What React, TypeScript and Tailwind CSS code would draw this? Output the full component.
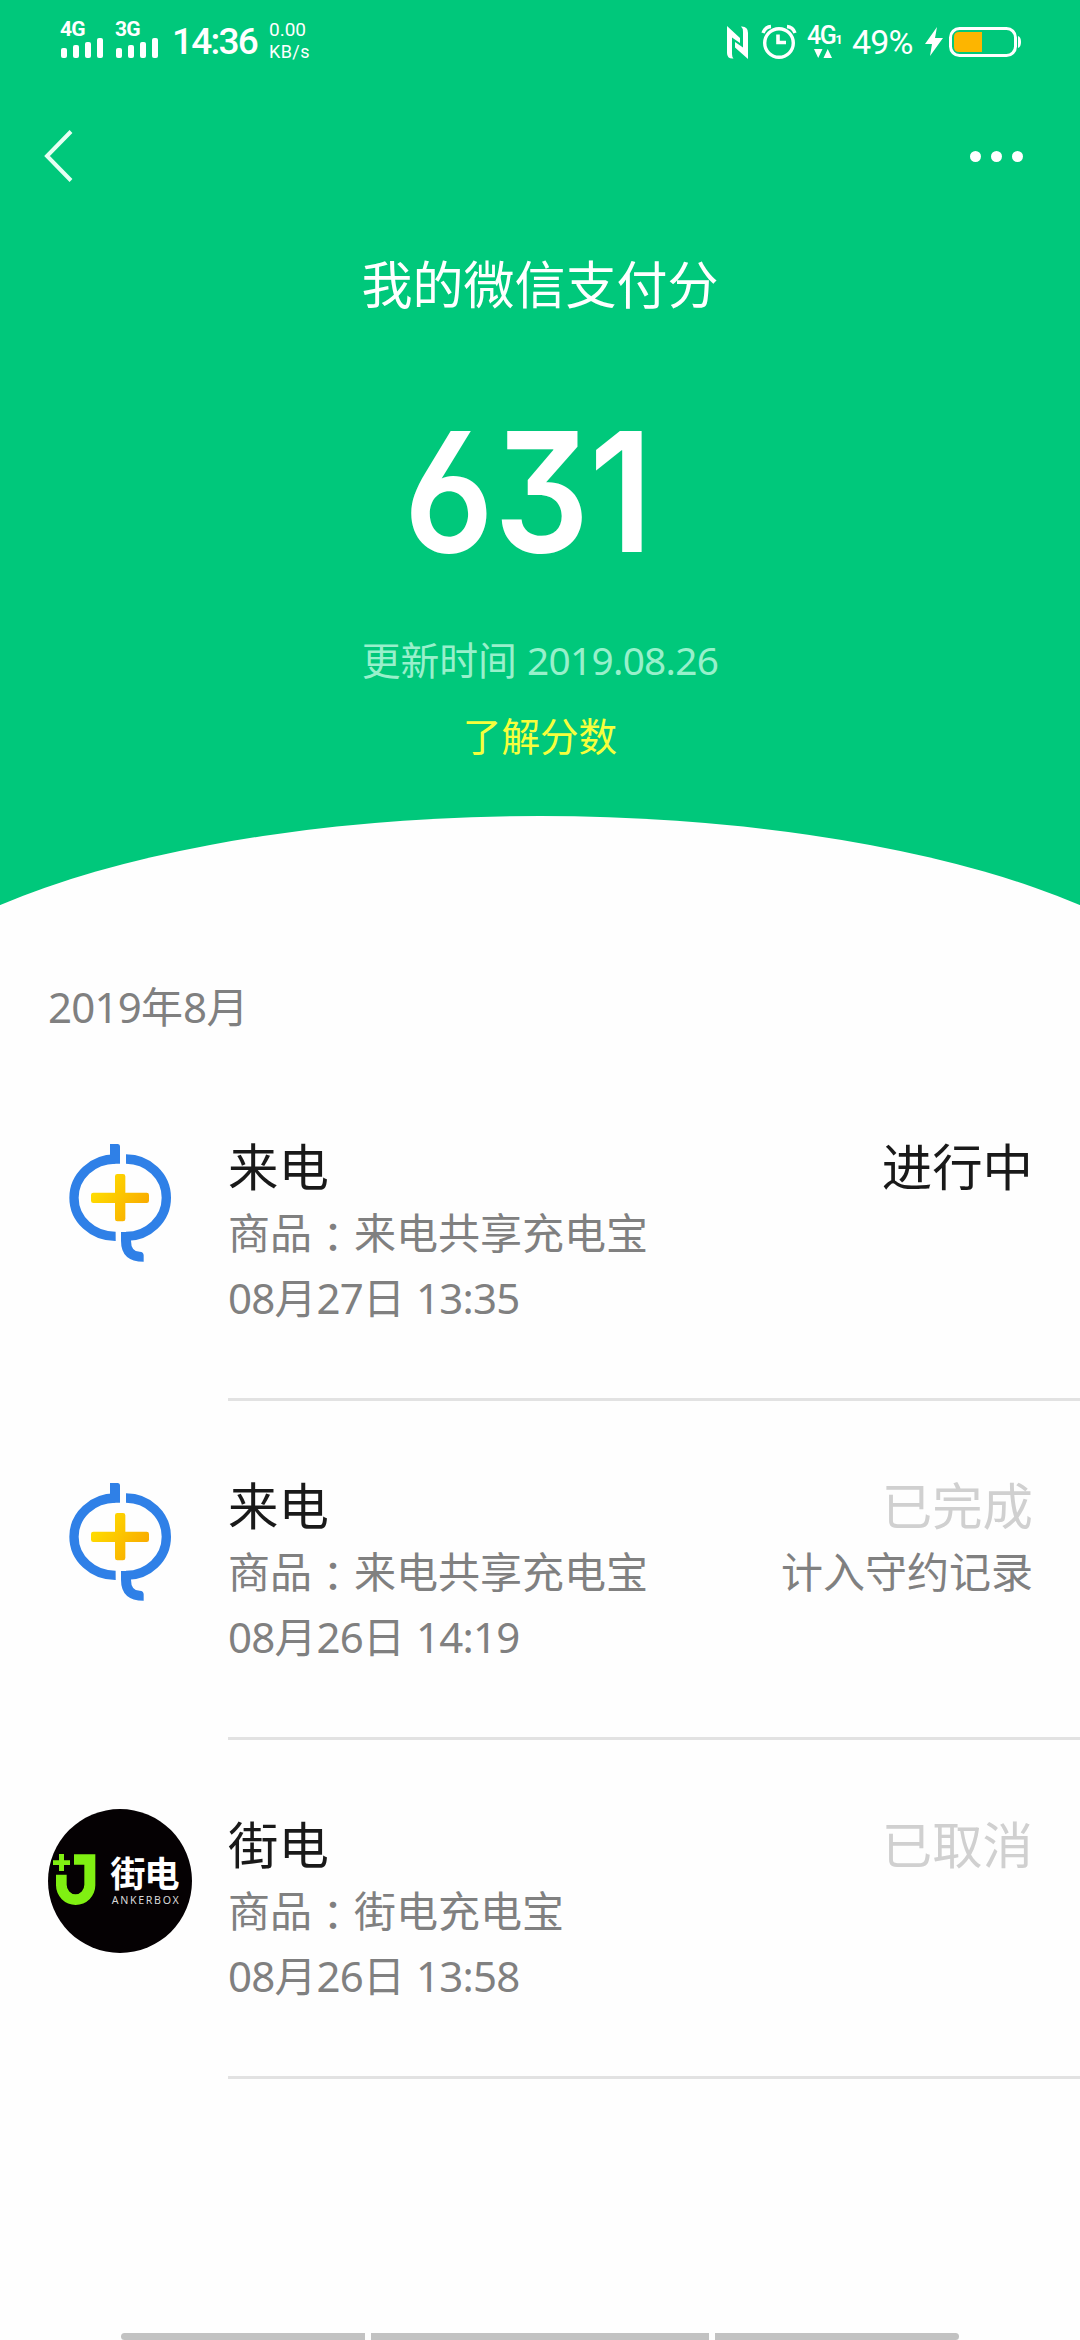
import { clsx } from "clsx";

type Order = {
  shop: string;
  goods: string;
  time: string;
  status: string;
  active?: boolean;
  note?: string;
  logo: "laidian" | "ankerbox";
};

const orders: Order[] = [
  { shop: "来电", goods: "来电共享充电宝", time: "08月27日 13:35", status: "进行中", active: true, logo: "laidian" },
  { shop: "来电", goods: "来电共享充电宝", time: "08月26日 14:19", status: "已完成", note: "计入守约记录", logo: "laidian" },
  { shop: "街电", goods: "街电充电宝", time: "08月26日 13:58", status: "已取消", logo: "ankerbox" },
];

// Digits sit slightly tighter than the Chinese characters around them
function DateText({ children }: { children: string }) {
  return children.split(/([\d.:]+)/).map((part, i) =>
    /\d/.test(part) ? (
      <span key={i} className="tracking-[-0.018em]">
        {part}
      </span>
    ) : (
      part
    ),
  );
}

function Signal({ label }: { label: string }) {
  return (
    <div className="flex w-[43px] flex-col">
      <span className="-ml-px font-['Roboto',sans-serif] text-[21px] leading-[16px] font-bold tracking-[-0.8px]">{label}</span>
      <div className="mt-px flex h-5 items-end gap-1.5">
        <i className="h-[10px] w-1.5 rounded-[2px] bg-white" />
        <i className="h-[13px] w-1.5 rounded-[2px] bg-white" />
        <i className="h-[16px] w-1.5 rounded-[2px] bg-white" />
        <i className="h-[20px] w-1.5 rounded-[2px] bg-white" />
      </div>
    </div>
  );
}

function StatusBar() {
  return (
    <div className="flex h-[84px] items-start pt-[21px] pl-[61px] font-['Roboto',sans-serif] text-white">
      <Signal label="4G" />
      <div className="ml-3">
        <Signal label="3G" />
      </div>
      <span className="ml-[13px] w-[97px] text-[37px] leading-[42px] font-medium tracking-[-1.8px] whitespace-nowrap">14:36</span>
      <div className="flex w-[61px] flex-col text-[19px] leading-[23px]">
        <span className="-mt-[3px]">0.00</span>
        <span className="-mt-px text-[18px] tracking-[0.4px]">KB/s</span>
      </div>

      <svg className="mt-[4px] ml-[396px] h-[36px] w-[24px]" viewBox="0 0 24 36" fill="white">
        <path d="M1 1 L14 13 V18 L6 12.500 V29 Q6 32 7.500 33.500 Q1 34 1 28 Z" />
        <path d="M22 34 L9 22.500 V17 L17 22.500 V7 Q17 3 15 1.500 Q22 1 22 8 Z" />
      </svg>
      <svg className="mt-[3px] ml-[11px] h-[36px] w-[36px]" viewBox="0 0 36 36" fill="none" stroke="white">
        <circle cx="18" cy="19" r="14.3" strokeWidth="3.4" />
        <path d="M17 10.500 V18.500 H25" strokeWidth="3.600" />
        <path d="M2 9 Q4 3 10 2.500 M26 2.500 Q32 3 34 9" strokeWidth="3.400" />
      </svg>
      <div className="mt-[5px] ml-[10px] flex w-[36px] flex-col">
        <div className="flex items-end leading-[20px]">
          <span className="text-[25px] font-medium tracking-[-1.5px]">4G</span>
          <span className="text-[13px] leading-[13px] font-bold">1</span>
        </div>
        <svg className="mt-[3px] ml-[7px] h-[9px] w-[18px]" viewBox="0 0 18 9" fill="white">
          <path d="M0 0 H8.500 L4.200 9 Z M9.500 9 H18 L13.700 0 Z" />
        </svg>
      </div>
      <span className="ml-[9px] w-[68px] text-[34px] leading-[42px] tracking-[-0.9px]">49%</span>
      <svg className="mt-[6px] ml-[4px] h-[30px] w-[20px]" viewBox="0 0 20 30" fill="white">
        <path d="M13 0 L1 17 H8 L6 29 L19 11 H11 Z" />
      </svg>
      <svg className="mt-[5px] ml-[5px] h-[32px] w-[74px]" viewBox="0 0 74 32">
        <path d="M10 6 H33 V26 H10 Q5 26 5 21 V11 Q5 6 10 6 Z" fill="#fdb500" />
        <rect x="1.500" y="2.500" width="65" height="27" rx="9" fill="none" stroke="white" strokeWidth="3" />
        <path d="M69 10 Q72 11 72 16 Q72 21 69 22 Z" fill="white" />
      </svg>
    </div>
  );
}

function LaidianLogo() {
  return (
    <svg className="h-36 w-36" viewBox="54 33 432 432" fill="none">
      <defs>
        <linearGradient id="gold" x1="183" y1="170" x2="357" y2="290" gradientUnits="userSpaceOnUse">
          <stop offset="0.1" stopColor="#ffdf00" />
          <stop offset="1" stopColor="#f8a400" />
        </linearGradient>
      </defs>
      <g stroke="#2f80e7" strokeWidth="28">
        <path d="M256 117 A124 116 0 0 0 132 233 A124 116 0 0 0 257 349" />
        <path d="M288 117 A121 116 0 0 1 409 233 A121 116 0 0 1 288 349" />
      </g>
      <path d="M240 72 H264 Q270 73 270 79 V131 H240 Z" fill="#2f80e7" />
      <path d="M273 336 H303 V362 Q303 395 329 395 Q341 396 341 406 V425 Q273 425 273 362 Z" fill="#2f80e7" />
      <path
        d="M262 162 H279 Q286 162 286 169 V218 H350 Q357 218 357 225 V242 Q357 249 350 249 H286 V297 Q286 304 279 304 H262 Q255 304 255 297 V249 H190 Q183 249 183 242 V225 Q183 218 190 218 H255 V169 Q255 162 262 162 Z"
        fill="url(#gold)"
      />
    </svg>
  );
}

function AnkerboxLogo() {
  return (
    <svg className="h-36 w-36 rounded-full bg-[#050103]" viewBox="54 57 432 432">
      <g fill="#80f012">
        <path d="M132 193 H196 V286 A59 59 0 0 1 78 286 V254 H110 V284 A26.500 29 0 0 0 163 284 V224 H132 Z" />
        <path d="M87 192 H102 V211 H120 V225 H102 V243 H87 V225 H69 V211 H87 Z" />
      </g>
      <text x="241" y="290" textLength="208" fill="white" className="font-['Noto_Sans_CJK_SC',sans-serif] text-[106px] font-bold">
        街电
      </text>
      <text x="245" y="343" textLength="201" fill="#d8d8d8" className="font-['Noto_Sans',sans-serif] text-[32px]">
        ANKERBOX
      </text>
    </svg>
  );
}

function OrderRow({ order }: { order: Order }) {
  return (
    <li className="flex h-[339px] pl-12">
      <div className="w-[180px] shrink-0 pt-[69px]">
        {order.logo === "laidian" ? <LaidianLogo /> : <AnkerboxLogo />}
      </div>
      <div className="flex flex-1 justify-between border-b-[3px] border-[#e2e2e2] pt-[72px] pr-12 text-[42px] leading-[66px] text-[#808080]">
        <div>
          <h2 className="text-[50.400px] text-[#191919]">{order.shop}</h2>
          <p className="h-[65px]">
            商品<span className="relative top-[4px] font-['Noto_Sans_CJK_TC',sans-serif] leading-none">：</span>
            {order.goods}
          </p>
          <p>
            <DateText>{order.time}</DateText>
          </p>
        </div>
        <div className="-mr-px text-right">
          <p className={clsx("text-[50.400px]", order.active ? "text-[#191919]" : "text-[#d0d0d0]")}>{order.status}</p>
          {order.note && <p>{order.note}</p>}
        </div>
      </div>
    </li>
  );
}

export default function App() {
  return (
    <div className="flex h-[2340px] w-[1080px] flex-col overflow-hidden bg-[#fefefe] font-['Noto_Sans','Noto_Sans_CJK_SC',sans-serif]">
      <header className="flex h-[905px] shrink-0 flex-col bg-[#00c87b]">
        <StatusBar />

        <nav className="flex h-[144px] items-center justify-between pr-[57px] pl-[42px]">
          <svg className="h-[54px] w-[32px]" viewBox="0 0 32 54" fill="none" stroke="#e6fff3" strokeWidth="4">
            <path d="M29 2.500 L5 27 L29 51.500" />
          </svg>
          <div className="flex gap-[10px]">
            <i className="size-[11px] rounded-full bg-white" />
            <i className="size-[11px] rounded-full bg-white" />
            <i className="size-[11px] rounded-full bg-white" />
          </div>
        </nav>

        <div className="flex flex-1 flex-col items-center">
          <h1 className="mt-[18px] text-[51px] leading-[76px] text-white">我的微信支付分</h1>
          <div className="mt-[70px] flex h-[200px] items-center pr-[24px] font-['Inter',sans-serif] text-[166px] leading-[200px] font-semibold text-white [font-feature-settings:'cv03','cv09']">
            <span className="scale-x-[0.9]">631</span>
          </div>
          <p className="mt-[38px] text-[38.800px] leading-[60px] text-[#98f0cb]">
            <DateText>更新时间 2019.08.26</DateText>
          </p>
          <p className="mt-[16px] text-[38.600px] leading-[60px] text-[#f6ff3c]">了解分数</p>
        </div>

        {/* Curved bottom edge */}
        <div className="flex h-[89px] shrink-0 justify-center overflow-hidden">
          <div className="h-[490px] w-[1400px] shrink-0 rounded-[50%] bg-[#fefefe]" />
        </div>
      </header>

      <main className="flex-1">
        <h3 className="mt-[72px] mb-[25px] pl-12 text-[42px] leading-[60px] text-[#808080]">
          <DateText>2019年8月</DateText>
        </h3>
        <ul>
          {orders.map((order) => (
            <OrderRow key={order.time} order={order} />
          ))}
        </ul>
      </main>

      <footer className="flex h-[7px] shrink-0 justify-center gap-1.5">
        <i className="w-[244px] rounded-l-[4px] bg-[#c2c2c2]" />
        <i className="w-[338px] bg-[#c2c2c2]" />
        <i className="w-[244px] rounded-r-[4px] bg-[#c2c2c2]" />
      </footer>
    </div>
  );
}
